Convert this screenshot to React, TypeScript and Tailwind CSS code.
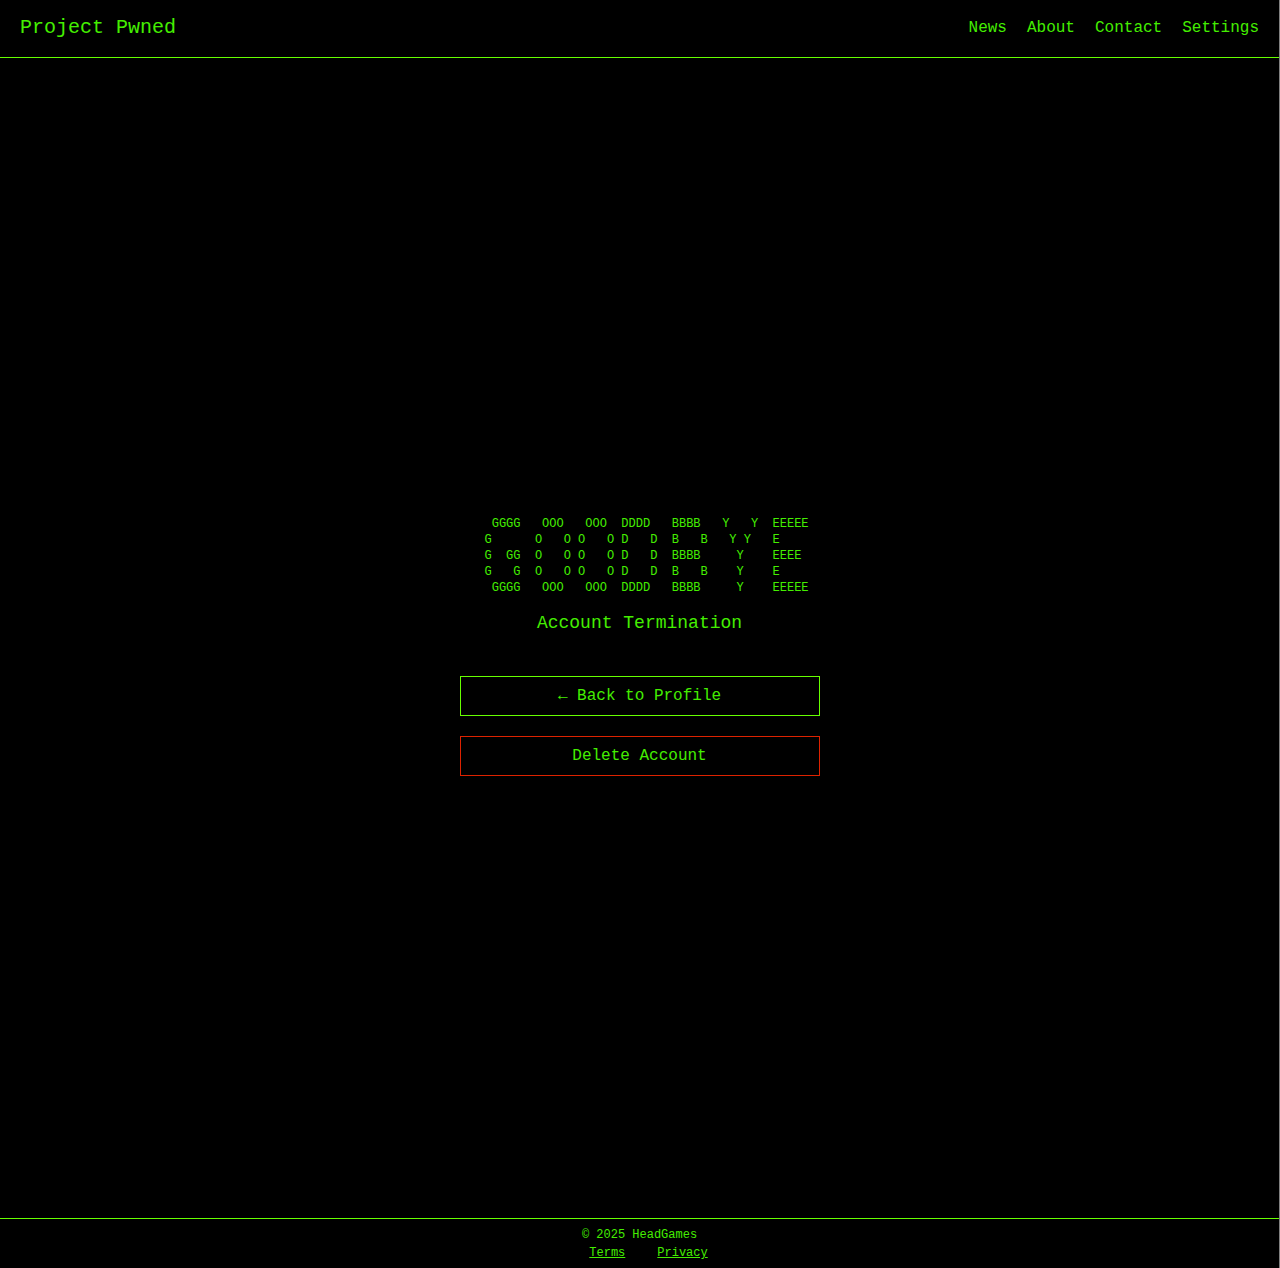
const art = [
  " GGGG   OOO   OOO  DDDD   BBBB   Y   Y  EEEEE",
  "G      O   O O   O D   D  B   B   Y Y   E",
  "G  GG  O   O O   O D   D  BBBB     Y    EEEE",
  "G   G  O   O O   O D   D  B   B    Y    E",
  " GGGG   OOO   OOO  DDDD   BBBB     Y    EEEEE",
].join("\n");

const navLinks = ["News", "About", "Contact", "Settings"];

const App = () => {
  return (
    <div
      className="flex flex-col min-h-screen bg-black text-[#44ee00] border-r border-r-[#808080]"
      style={{ fontFamily: '"Liberation Mono", "Courier New", monospace' }}
    >
      <header className="flex items-center justify-between h-[57px] px-5">
        <h1 className="text-[20px] leading-[28px] -mt-[2px]">Project Pwned</h1>
        <nav className="flex gap-5 text-[16px] -mt-[2px]">
          {navLinks.map((link) => (
            <a key={link} href="#" className="text-[#44ee00]">
              {link}
            </a>
          ))}
        </nav>
      </header>
      <div className="h-px bg-[#66ff00]" />

      <main className="flex-1 flex flex-col items-center justify-center pt-[16px]">
        <pre className="text-[12px] leading-[16px] pl-[14px] w-[338px]">
          {art}
        </pre>
        <h2 className="text-[18px] leading-[28px] mt-[13px]">
          Account Termination
        </h2>

        <div className="flex flex-col gap-5 w-[360px] mt-[39px]">
          <button className="h-10 border border-[#66ff00] bg-black text-[16px]">
            ← Back to Profile
          </button>
          <button className="h-10 border border-[#dd2200] bg-black text-[16px]">
            Delete Account
          </button>
        </div>
      </main>

      <footer className="flex flex-col items-center border-t border-t-[#66ff00] pt-[7px] pb-[6px] text-[12px] leading-[18px]">
        <p>© 2025 HeadGames</p>
        <div className="flex gap-8 pl-[18px]">
          <a href="#" className="underline">Terms</a>
          <a href="#" className="underline">Privacy</a>
        </div>
      </footer>
    </div>
  );
};

export default App;
